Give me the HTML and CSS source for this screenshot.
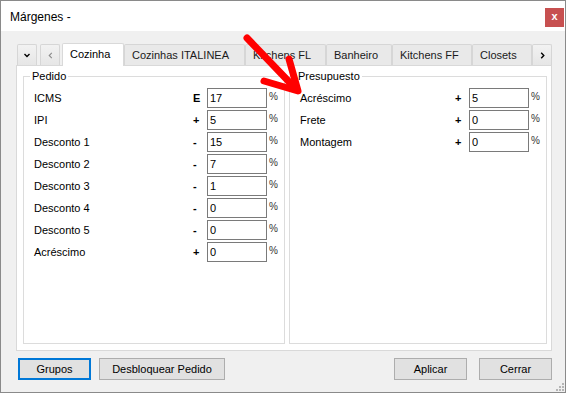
FILE: index.html
```html
<!DOCTYPE html>
<html lang="es">
<head>
  <meta charset="UTF-8" />
  <title>Márgenes</title>
  <link rel="stylesheet" href="styles.css">
</head>
<body>

  <div class="window">
    <div class="titlebar">
      <span class="title">Márgenes -</span>
      <span class="close">x</span>
    </div>

    <div class="content">
      <div class="tabstrip">
        <span class="tab nav nav-menu">
          <svg width="6" height="5" viewBox="0 0 6 5"><polyline points="0.5,1 3,3.5 5.5,1" fill="none" stroke="#000" stroke-width="1.4"/></svg>
        </span>
        <span class="tab nav nav-prev">
          <svg width="5" height="7" viewBox="0 0 5 7"><polyline points="3.8,0.8 1.2,3.5 3.8,6.2" fill="none" stroke="#8c8c8c" stroke-width="1.1"/></svg>
        </span>
        <span class="tab active tab-cozinha">Cozinha</span>
        <span class="tab tab-italinea">Cozinhas ITALINEA</span>
        <span class="tab tab-fl">Kitchens FL</span>
        <span class="tab tab-banheiro">Banheiro</span>
        <span class="tab tab-ff">Kitchens FF</span>
        <span class="tab tab-closets">Closets</span>
        <span class="tab nav nav-next">
          <svg width="5" height="7" viewBox="0 0 5 7"><polyline points="1.2,0.8 3.8,3.5 1.2,6.2" fill="none" stroke="#000" stroke-width="1.4"/></svg>
        </span>
      </div>

      <div class="panel">
        <fieldset class="group">
          <legend>Pedido</legend>
          <div class="row"><span class="label">ICMS</span><b class="sign">E</b><input class="field" value="17"><span class="pct">%</span></div>
          <div class="row"><span class="label">IPI</span><b class="sign">+</b><input class="field" value="5"><span class="pct">%</span></div>
          <div class="row"><span class="label">Desconto 1</span><b class="sign">-</b><input class="field" value="15"><span class="pct">%</span></div>
          <div class="row"><span class="label">Desconto 2</span><b class="sign">-</b><input class="field" value="7"><span class="pct">%</span></div>
          <div class="row"><span class="label">Desconto 3</span><b class="sign">-</b><input class="field" value="1"><span class="pct">%</span></div>
          <div class="row"><span class="label">Desconto 4</span><b class="sign">-</b><input class="field" value="0"><span class="pct">%</span></div>
          <div class="row"><span class="label">Desconto 5</span><b class="sign">-</b><input class="field" value="0"><span class="pct">%</span></div>
          <div class="row"><span class="label">Acréscimo</span><b class="sign">+</b><input class="field" value="0"><span class="pct">%</span></div>
        </fieldset>

        <fieldset class="group">
          <legend>Presupuesto</legend>
          <div class="row"><span class="label">Acréscimo</span><b class="sign">+</b><input class="field" value="5"><span class="pct">%</span></div>
          <div class="row"><span class="label">Frete</span><b class="sign">+</b><input class="field" value="0"><span class="pct">%</span></div>
          <div class="row"><span class="label">Montagem</span><b class="sign">+</b><input class="field" value="0"><span class="pct">%</span></div>
        </fieldset>
      </div>

      <div class="actions">
        <button class="btn btn-grupos focused">Grupos</button>
        <button class="btn btn-unlock">Desbloquear Pedido</button>
        <button class="btn btn-apply">Aplicar</button>
        <button class="btn btn-close">Cerrar</button>
      </div>
    </div>

    <!-- size grip -->
    <svg class="grip" width="8" height="8" viewBox="0 0 8 8" fill="#b5b5b5">
      <rect x="6" y="0" width="2" height="2"/>
      <rect x="3" y="3" width="2" height="2"/><rect x="6" y="3" width="2" height="2"/>
      <rect x="0" y="6" width="2" height="2"/><rect x="3" y="6" width="2" height="2"/><rect x="6" y="6" width="2" height="2"/>
    </svg>

    <!-- red annotation arrow -->
    <svg class="arrow" width="566" height="393" viewBox="0 0 566 393">
      <g stroke="#ff0000" stroke-width="7" stroke-linecap="round" stroke-linejoin="round" fill="none">
        <path d="M247 38 L295 88"/>
        <path d="M289 59 L298 91 L264 81"/>
      </g>
    </svg>
  </div>

</body>
</html>
```

FILE: styles.css
```css
body {
  margin: 0;
  font-family: "Liberation Sans", Arial, sans-serif;
  font-size: 11px;
  color: #000;
}

.window {
  position: relative;
  width: 566px;
  height: 393px;
  box-sizing: border-box;
  border: 1px solid #8a8a8a;
  background: #f0f0f0;
  display: flex;
  flex-direction: column;
}

.titlebar {
  height: 30px;
  flex: none;
  background: #fff;
  display: flex;
  align-items: flex-start;
  padding: 0 1px 0 9px;
}

.title {
  font-size: 12px;
  line-height: 14px;
  margin-top: 9px;
}

.close {
  margin-left: auto;
  margin-top: 7px;
  width: 19px;
  height: 19px;
  background: #c75050;
  color: #fff;
  font-weight: bold;
  font-size: 11px;
  line-height: 17px;
  text-align: center;
}

.content {
  flex: 1;
  padding: 12px 13px 0 15px;
  display: flex;
  flex-direction: column;
}

/* tabs */
.tabstrip {
  display: flex;
  align-items: flex-end;
  height: 22px;
}

.tab {
  height: 21px;
  box-sizing: border-box;
  border: 1px solid #d6d6d6;
  border-bottom: none;
  border-radius: 2px 2px 0 0;
  background: #e9e9e9;
  padding-left: 7px;
  line-height: 20px;
  white-space: nowrap;
  color: #1a1a1a;
}

.tab.active {
  height: 23px;
  margin-bottom: -1px;
  position: relative;
  z-index: 1;
  background: #fff;
  border-color: #d9d9d9;
  color: #000;
}

.nav {
  width: 20px;
  padding: 0;
  display: flex;
  align-items: center;
  justify-content: center;
  background: linear-gradient(#f2f2f2, #e6e6e6);
}

.nav-menu { margin-left: 1px; }
.nav-prev { margin-left: 3px; }
.tab-cozinha { margin-left: 2px; width: 62px; }
.tab-italinea { width: 121px; }
.tab-fl { width: 81px; }
.tab-banheiro { width: 66px; }
.tab-ff { width: 80px; }
.tab-closets { width: 60px; }

.panel {
  height: 286px;
  box-sizing: border-box;
  background: #fff;
  border: 1px solid #d9d9d9;
  padding: 3px 4px 6px 6px;
  display: grid;
  grid-template-columns: 262px 258px;
  column-gap: 4px;
}

.group {
  margin: 0;
  min-width: 0;
  padding: 5px 0 0 10px;
  border: 1px solid #dcdcdc;
}

.group legend {
  padding: 0 2px;
  margin-left: -4px;
  line-height: 14px;
}

.row {
  display: grid;
  grid-template-columns: 1fr 14px 60px 17px;
  align-items: center;
  height: 20px;
  margin-bottom: 2px;
}

.sign {
  font-weight: bold;
}

.field {
  width: 60px;
  height: 20px;
  box-sizing: border-box;
  margin: 0;
  border: 1px solid #7a7a7a;
  padding: 0 2px;
  font-family: inherit;
  font-size: 11px;
  color: #000;
  background: #fff;
}

.pct {
  align-self: start;
  padding: 3px 0 0 2px;
  font-size: 10px;
  line-height: 12px;
  color: #333;
}

/* bottom buttons */
.actions {
  display: flex;
  margin-top: 7px;
  padding-left: 2px;
}

.btn {
  height: 22px;
  box-sizing: border-box;
  border: 1px solid #adadad;
  background: #e1e1e1;
  padding: 0;
  font-family: inherit;
  font-size: 11px;
  color: #000;
}

.btn.focused {
  border: 2px solid #0078d7;
}

.btn-grupos { width: 73px; }
.btn-unlock { width: 126px; margin-left: 8px; }
.btn-apply { width: 73px; margin-left: auto; margin-right: 12px; }
.btn-close { width: 73px; }

.grip {
  position: absolute;
  right: 1px;
  bottom: 1px;
}

.arrow {
  position: absolute;
  left: -1px;
  top: -1px;
  pointer-events: none;
}
```
